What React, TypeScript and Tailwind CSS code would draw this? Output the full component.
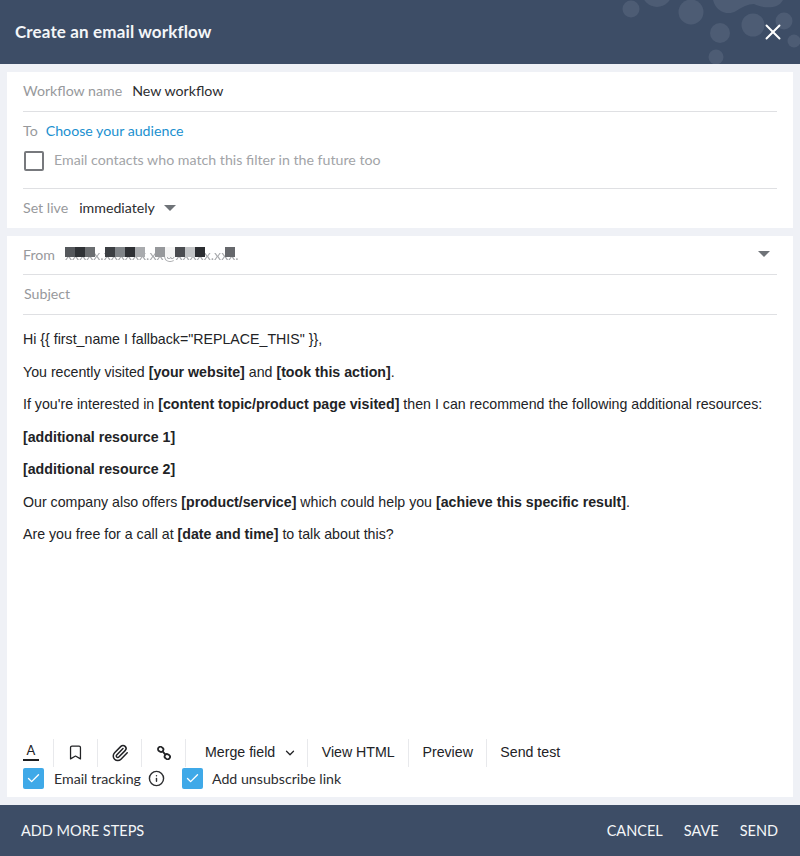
import React from "react";
import { X, ChevronDown, Bookmark, Paperclip, Info, Check } from "lucide-react";

const lato = "font-['Lato','Noto_Sans',sans-serif]";
const arial = "font-['Liberation_Sans',Arial,sans-serif]";

function Caret() {
  return <span className="inline-block w-0 h-0 border-l-[6px] border-r-[6px] border-t-[6px] border-l-transparent border-r-transparent border-t-[#6f7378]" />;
}

function Ticked() {
  return (
    <span className="w-[21px] h-[21px] rounded-[2px] bg-[#3fa9e8] flex items-center justify-center shrink-0">
      <Check size={15} color="white" strokeWidth={2.2} />
    </span>
  );
}

const blocks: string[] = [
  "#55585c", "#2f3236", "#6a6d70", "transparent",
  "#3c3f43", "#808488", "#2e3034", "#a9abae", "transparent",
  "#96989b", "#f4f4f4", "#4a4c50", "#c2c4c6", "#2b2d31", "transparent", "transparent", "#66686c",
];

function Divider() {
  return <span className="w-px h-[28px] bg-[#e8e9ec] shrink-0" />;
}

export default function App() {
  return (
    <div className={`w-[800px] h-[856px] bg-[#eff1f6] flex flex-col overflow-hidden ${lato}`}>
      <header className="relative h-16 shrink-0 bg-[#3d4d66] flex items-center justify-between pl-[15px] pr-[14px] overflow-hidden">
        <svg className="absolute right-0 top-0" width="240" height="64" viewBox="560 0 240 64" fill="#4d5c74">
          <circle cx="631" cy="9" r="8.5" />
          <circle cx="691" cy="12" r="12.5" />
          <circle cx="657" cy="-8" r="15" />
          <circle cx="720" cy="33" r="10" />
          <circle cx="753" cy="25" r="11.5" />
          <circle cx="784" cy="21" r="8.5" />
          <circle cx="794" cy="41" r="6.5" />
          <circle cx="716" cy="57" r="7.5" />
          <path d="M713 0 C716 12 728 16 736 11 C742 7 748 4 754 4 C762 8 778 10 783 0 Z" />
        </svg>
        <h1 className="relative text-[17px] font-bold text-[#f4f6f8] tracking-[0.14px]">Create an email workflow</h1>
        <X className="relative" size={26} color="white" strokeWidth={1.8} />
      </header>

      <main className="flex-1 flex flex-col gap-2 px-[7px] pt-2 pb-2">
        <section className="bg-white h-[156px] px-4 shrink-0 text-[14.2px]">
          <div className="h-[40px] pb-[2px] flex items-center gap-[10px] border-b border-[#dfe0e3]">
            <span className="text-[#97999c]">Workflow name</span>
            <span className="text-[#2c2d30]">New workflow</span>
          </div>
          <div className="h-[77px] pt-[8px] border-b border-[#dfe0e3]">
            <div className="flex items-center gap-2 h-[22px]">
              <span className="text-[#97999c]">To</span>
              <span className="text-[#2090cf]">Choose your audience</span>
            </div>
            <div className="flex items-center gap-[10px] mt-[9px]">
              <span className="w-[20px] h-[20px] ml-px border-2 border-[#77797d] rounded-[2px] shrink-0" />
              <span className="text-[#a2a4a7] -mt-[3px]">Email contacts who match this filter in the future too</span>
            </div>
          </div>
          <div className="h-[39px] pb-[2px] flex items-center">
            <span className="text-[#97999c]">Set live</span>
            <span className="text-[#2c2d30] ml-[11px]">immediately</span>
            <span className="ml-[9px] flex"><Caret /></span>
          </div>
        </section>

        <section className="flex-1 bg-white px-4 flex flex-col">
          <div className="h-[39px] flex items-center border-b border-[#dfe0e3] text-[14.2px]">
            <span className="text-[#97999c]">From</span>
            <span className="relative ml-[10px] text-[#a9abae] blur-[0.5px]">
              xxxxx.xxxxxx.xx@xxxxx.xxx.
              <span className="absolute left-0 top-[3px] flex h-[10px]">
                {blocks.map((c, i) => (
                  <span key={i} className="h-full w-[10px]" style={{ background: c }} />
                ))}
              </span>
            </span>
            <span className="ml-auto mr-[7px] -mt-[2px] flex"><Caret /></span>
          </div>
          <div className="h-[40px] pb-[2px] flex items-center border-b border-[#dfe0e3] text-[14.2px] text-[#97999c] pl-px">Subject</div>

          <div className={`flex-1 pt-[8px] text-[14.2px] leading-[32.5px] text-[#222326] ${arial}`}>
            <p>Hi {"{{"} first_name I fallback="REPLACE_THIS" {"}}"},</p>
            <p>You recently visited <b>[your website]</b> and <b>[took this action]</b>.</p>
            <p>If you're interested in <b>[content topic/product page visited]</b> then I can recommend the following additional resources:</p>
            <p><b>[additional resource 1]</b></p>
            <p><b>[additional resource 2]</b></p>
            <p>Our company also offers <b>[product/service]</b> which could help you <b>[achieve this specific result]</b>.</p>
            <p>Are you free for a call at <b>[date and time]</b> to talk about this?</p>
          </div>

          <div className={`h-[29px] flex items-center text-[14.2px] text-[#222326] ${arial}`}>
            <span className="w-[16px] mr-[14px] flex flex-col items-center shrink-0">
              <span className={`text-[13px] leading-[13px] ${lato}`}>A</span>
              <span className="w-[16px] h-[2px] mt-[2px] bg-[#1d1e20]" />
            </span>
            <Divider />
            <span className="w-[43px] flex justify-center shrink-0"><Bookmark size={17} strokeWidth={1.8} /></span>
            <Divider />
            <span className="w-[43px] flex justify-center shrink-0"><Paperclip size={18} strokeWidth={2} /></span>
            <Divider />
            <span className="w-[43px] flex justify-center shrink-0">
              <svg width="14" height="14" viewBox="0 0 14 14" fill="none" stroke="#222326" strokeWidth="1.8">
                <rect x="1" y="1" width="5.4" height="4.6" rx="2.2" transform="rotate(35 3.7 3.3)" />
                <rect x="7.6" y="8.4" width="5.4" height="4.6" rx="2.2" transform="rotate(35 10.3 10.7)" />
                <path d="M5.6 5.4 8.4 8.6" />
              </svg>
            </span>
            <Divider />
            <span className="ml-[19px]">Merge field</span>
            <ChevronDown size={14} strokeWidth={2.2} className="ml-[8px]" />
            <span className="w-[10px] shrink-0" />
            <Divider />
            <span className="px-[13.5px]">View HTML</span>
            <Divider />
            <span className="px-[13.2px]">Preview</span>
            <Divider />
            <span className="px-[13.2px]">Send test</span>
          </div>
          <div className="h-[25px] mb-[5px] flex items-center text-[14.2px] text-[#2c2d30]">
            <span className="-mt-[2px]"><Ticked /></span>
            <span className="ml-[10px] -mt-[1px]">Email tracking</span>
            <Info size={17} strokeWidth={2} className="ml-[7px] -mt-[2px]" />
            <span className="ml-[17px] -mt-[2px]"><Ticked /></span>
            <span className="ml-[9px] -mt-[1px]">Add unsubscribe link</span>
          </div>
        </section>
      </main>

      <footer className="h-[51px] pt-[1px] shrink-0 bg-[#3d4d66] flex items-center justify-between pl-[21px] pr-[22px] text-[14.5px] text-[#f4f6f8]">
        <span>ADD MORE STEPS</span>
        <div className="flex gap-[21px]">
          <span>CANCEL</span>
          <span>SAVE</span>
          <span>SEND</span>
        </div>
      </footer>
    </div>
  );
}
